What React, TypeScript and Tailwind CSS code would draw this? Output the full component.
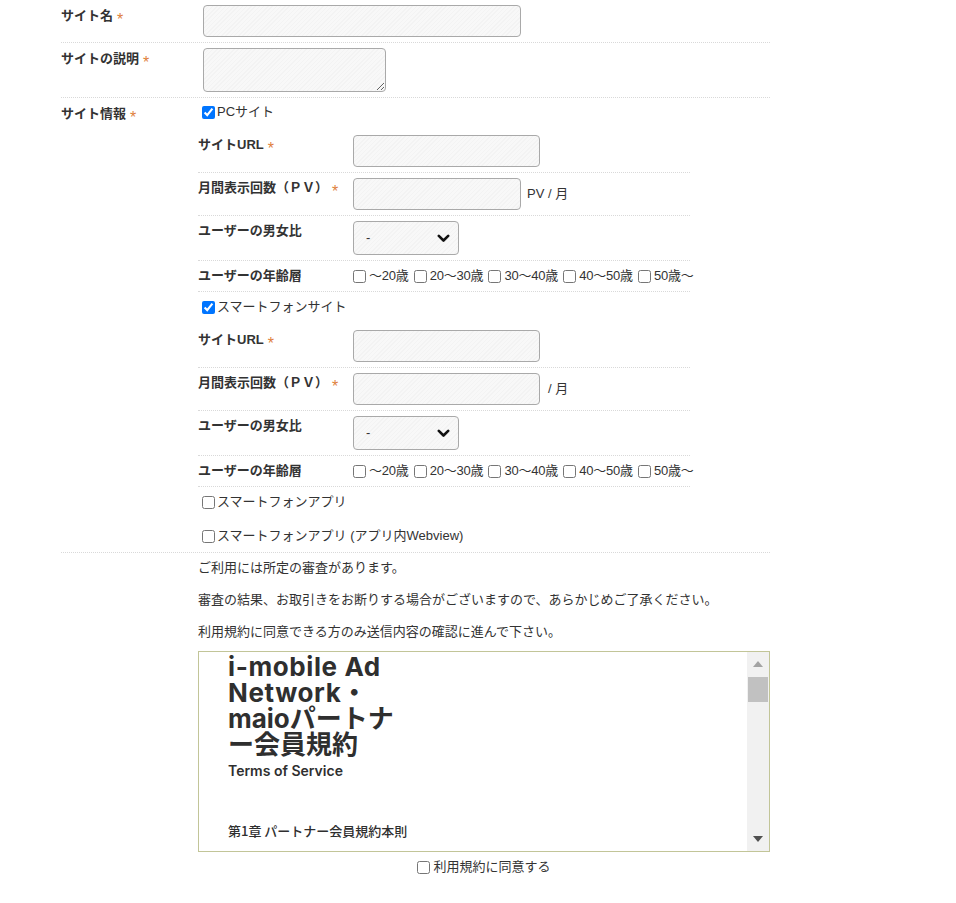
import React from "react";

const field =
  "border border-[#a9a9a9] rounded-[4px] bg-[#f6f6f6] bg-[image:repeating-linear-gradient(135deg,#f3f3f3_0px,#f3f3f3_1px,#f8f8f8_1px,#f8f8f8_3px)]";

function Req() {
  return <span className="ml-[4px] text-[16px] leading-[0] font-normal text-[#e07f3c] align-[-5px]">*</span>;
}

function Check({ checked, label }: { checked?: boolean; label: string }) {
  return (
    <label className="flex items-center h-[18px] text-[13px] text-[#333]">
      <input type="checkbox" defaultChecked={checked} className="ml-[4px] mr-[2px] w-[13px] h-[13px]" />
      <span>{label}</span>
    </label>
  );
}

function SubRow({ label, req, children }: { label: string; req?: boolean; children: React.ReactNode }) {
  return (
    <div className="flex border-b border-dotted border-[#d9d9d9] py-[5px]">
      <div className="w-[155px] shrink-0 pt-[1px] text-[13px] font-bold leading-[18px] text-[#333] whitespace-nowrap">
        {label}
        {req && <Req />}
      </div>
      <div className="flex-1 flex items-center">{children}</div>
    </div>
  );
}

function AgeCheck({ label }: { label: string }) {
  return (
    <label className="flex items-center mr-[5px] text-[13px] tracking-[-0.2px] text-[#333]">
      <input type="checkbox" className="m-0 mr-[3px] w-[13px] h-[13px]" />
      <span>{label}</span>
    </label>
  );
}

function Select() {
  return (
    <div className="relative w-[106px] h-[34px]">
      <select className={`${field} appearance-none w-full h-full pl-[12px] text-[13px] text-[#333] outline-none`}>
        <option>-</option>
      </select>
      <svg
        className="absolute right-[9px] top-[13px] pointer-events-none"
        width="13"
        height="9"
        viewBox="0 0 13 9"
        fill="none"
        stroke="#111"
        strokeWidth="2.6"
        strokeLinecap="round"
        strokeLinejoin="round"
      >
        <path d="M1.8 1.8 L6.5 6.5 L11.2 1.8" />
      </svg>
    </div>
  );
}

function SiteTable({ pvWidth, suffix, suffixGap }: { pvWidth: string; suffix: string; suffixGap: string }) {
  return (
    <div className="w-[492px] mt-[9px]">
      <SubRow label="サイトURL" req>
        <input type="text" className={`${field} w-[187px] h-[32px]`} />
      </SubRow>
      <SubRow label="月間表示回数（ＰＶ）" req>
        <input type="text" className={`${field} ${pvWidth} h-[32px]`} />
        <span className={`${suffixGap} text-[13px] text-[#333]`}>{suffix}</span>
      </SubRow>
      <SubRow label="ユーザーの男女比">
        <Select />
      </SubRow>
      <SubRow label="ユーザーの年齢層">
        <div className="flex items-center h-[20px] whitespace-nowrap">
          <AgeCheck label="～20歳" />
          <AgeCheck label="20～30歳" />
          <AgeCheck label="30～40歳" />
          <AgeCheck label="40～50歳" />
          <AgeCheck label="50歳～" />
        </div>
      </SubRow>
    </div>
  );
}

function Row({ label, req, children, extra }: { label?: string; req?: boolean; children: React.ReactNode; extra?: string }) {
  return (
    <div className={`flex border-b border-dotted border-[#d9d9d9] py-[5px] ${extra ?? ""}`}>
      <div className="w-[137px] shrink-0 pt-[2px] text-[13px] font-bold leading-[18px] text-[#333]">
        {label}
        {req && <Req />}
      </div>
      <div className="flex-1">{children}</div>
    </div>
  );
}

export default function App() {
  return (
    <div className="min-h-[903px] bg-white [font-family:'Liberation_Sans','Noto_Sans_CJK_JP',sans-serif] text-[#333]">
      <div className="ml-[61px] w-[709px]">
        <Row label="サイト名" req>
          <input type="text" className={`${field} ml-[5px] w-[318px] h-[32px] block`} />
        </Row>
        <Row label="サイトの説明" req>
          <textarea className={`${field} ml-[5px] w-[183px] h-[44px] block`} />
        </Row>
        <Row label="サイト情報" req extra="pb-[7px]">
          <Check checked label="PCサイト" />
          <SiteTable pvWidth="w-[168px]" suffix="PV / 月" suffixGap="ml-[6px]" />
          <div className="mt-[6px]">
            <Check checked label="スマートフォンサイト" />
          </div>
          <SiteTable pvWidth="w-[187px]" suffix="/ 月" suffixGap="ml-[8px]" />
          <div className="mt-[6px]">
            <Check label="スマートフォンアプリ" />
          </div>
          <div className="mt-[16px]">
            <Check label="スマートフォンアプリ (アプリ内Webview)" />
          </div>
        </Row>
        <div className="flex">
          <div className="w-[137px] shrink-0" />
          <div className="flex-1 pt-[6px]">
            <p className="text-[13px] leading-[18px] text-[#333]">ご利用には所定の審査があります。</p>
            <p className="mt-[14px] text-[13px] leading-[18px] text-[#333]">
              審査の結果、お取引きをお断りする場合がございますので、あらかじめご了承ください。
            </p>
            <p className="mt-[14px] text-[13px] leading-[18px] text-[#333]">
              利用規約に同意できる方のみ送信内容の確認に進んで下さい。
            </p>
            <div className="mt-[10px] flex h-[201px] w-[572px] border border-[#c2c598] bg-white">
              <div className="flex-1 overflow-hidden pl-[29px] pt-[2px] text-[#2f2f2f]">
                <div className="[font-family:'Inter','Noto_Sans_CJK_JP',sans-serif] text-[26px] leading-[26px] font-bold">
                  <div className="tracking-[0.6px]">i-mobile Ad</div>
                  <div className="tracking-[0.6px]">Network・</div>
                  <div>maioパートナ</div>
                  <div>ー会員規約</div>
                </div>
                <div className="mt-[4px] [font-family:'Inter','Noto_Sans_CJK_JP',sans-serif] text-[14px] leading-[18px] font-semibold">
                  Terms of Service
                </div>
                <div className="mt-[42px] [font-family:'Noto_Sans_CJK_JP',sans-serif] text-[13px] leading-[18px] font-medium">
                  第1章 パートナー会員規約本則
                </div>
              </div>
              <div className="w-[22px] shrink-0 bg-[#f1f1f1] flex flex-col items-center">
                <div className="h-[24px] flex items-center justify-center">
                  <svg width="10" height="6" viewBox="0 0 10 6">
                    <path d="M0 6 L5 0 L10 6 Z" fill="#a3a3a3" />
                  </svg>
                </div>
                <div className="mt-[1px] w-[20px] h-[25px] bg-[#c1c1c1]" />
                <div className="flex-1" />
                <div className="h-[24px] flex items-center justify-center">
                  <svg width="10" height="6" viewBox="0 0 10 6">
                    <path d="M0 0 L10 0 L5 6 Z" fill="#505050" />
                  </svg>
                </div>
              </div>
            </div>
            <div className="mt-[6px] flex justify-center">
              <label className="flex items-center h-[18px] text-[13px] text-[#333]">
                <input type="checkbox" className="m-0 mr-[3px] w-[13px] h-[13px]" />
                <span>利用規約に同意する</span>
              </label>
            </div>
          </div>
        </div>
      </div>
    </div>
  );
}
